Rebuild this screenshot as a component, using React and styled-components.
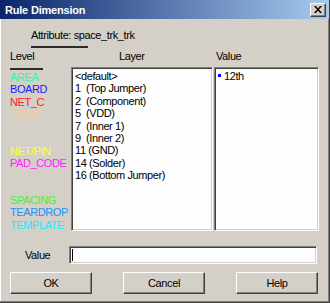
import styled, { createGlobalStyle } from "styled-components";

const GlobalStyle = createGlobalStyle`
  html, body {
    margin: 0;
    padding: 0;
    background: #d4d0c8;
  }
  body {
    font-family: "Liberation Sans", Arial, sans-serif;
    font-size: 11px;
    letter-spacing: -0.4px;
    color: #000;
  }
`;

const Window = styled.div`
  width: 330px;
  height: 303px;
  box-sizing: border-box;
  background: #d4d0c8;
  border-right: 1px solid #404040;
  border-bottom: 1px solid #404040;
  box-shadow: inset -1px -1px 0 #808080, inset 1px 0 0 #ffffff;
  display: flex;
  flex-direction: column;
`;

const TitleBar = styled.div`
  height: 19px;
  flex: none;
  display: flex;
  align-items: center;
  justify-content: space-between;
  padding: 0 3px 0 5px;
  background: linear-gradient(to right, #0a246a, #a6caf0);
  color: #fff;
  font-weight: bold;
  font-size: 11px;
  letter-spacing: -0.2px;
`;

const CloseButton = styled.div`
  width: 16px;
  height: 14px;
  box-sizing: border-box;
  background: #d4d0c8;
  border-top: 1px solid #fff;
  border-left: 1px solid #fff;
  border-right: 1px solid #404040;
  border-bottom: 1px solid #404040;
  box-shadow: inset -1px -1px 0 #808080;
  display: flex;
  align-items: center;
  justify-content: center;
`;

const Body = styled.div`
  flex: 1;
  display: flex;
  flex-direction: column;
  padding: 10px 11px 0 10px;
`;

const AttrTab = styled.div`
  padding-left: 21px;
  display: flex;
  flex-direction: column;
  align-items: flex-start;
  gap: 4px;
  line-height: 13px;
`;

const TabLine = styled.div`
  width: 57px;
  height: 2px;
  background: #2b2b2b;
`;

const Columns = styled.div`
  margin-top: 2px;
  display: grid;
  grid-template-columns: 60px 142px 105px;
  column-gap: 1px;
  grid-template-rows: 17px 164px;
`;

const Header = styled.div`
  line-height: 13px;
  padding-left: ${(p) => p.$indent || 0}px;
`;

const LevelList = styled.div`
  display: flex;
  flex-direction: column;
`;

const LevelRule = styled.div`
  width: 33px;
  height: 2px;
  margin: 1px 0 1px;
  background: #2b2b2b;
`;

const LevelItem = styled.div`
  height: 12.4px;
  line-height: 12.4px;
  color: ${(p) => p.$color};
  white-space: nowrap;
`;

const ListBox = styled.div`
  box-sizing: border-box;
  background: #fdfdfd;
  border-top: 1px solid #808080;
  border-left: 1px solid #808080;
  border-right: 1px solid #fff;
  border-bottom: 1px solid #fff;
  box-shadow: inset 1px 1px 0 #404040, inset -1px -1px 0 #d4d0c8;
  padding: 2px 3px;
  overflow: hidden;
`;

const ListItem = styled.div`
  height: 12.4px;
  line-height: 12.4px;
  white-space: pre;
  display: flex;
  align-items: center;
  gap: 3px;
`;

const Marker = styled.span`
  width: 3px;
  height: 3px;
  background: #0000ff;
  margin-top: -2px;
`;

const ValueRow = styled.div`
  margin-top: 15px;
  display: flex;
  align-items: center;
  padding-left: 15px;
`;

const ValueLabel = styled.div`
  width: 44px;
`;

const Input = styled.div`
  width: 248px;
  height: 18px;
  box-sizing: border-box;
  background: #fdfdfd;
  border-top: 1px solid #808080;
  border-left: 1px solid #808080;
  border-right: 1px solid #fff;
  border-bottom: 1px solid #fff;
  box-shadow: inset 1px 1px 0 #404040, inset -1px -1px 0 #d4d0c8;
  padding: 2px 0 2px 2px;
  display: flex;
`;

const Caret = styled.div`
  width: 1px;
  height: 100%;
  background: #000;
`;

const ButtonRow = styled.div`
  margin-top: 8px;
  display: flex;
  justify-content: space-between;
`;

const Button = styled.div`
  width: 82px;
  height: 22px;
  box-sizing: border-box;
  background: #d4d0c8;
  border-top: 1px solid #fff;
  border-left: 1px solid #fff;
  border-right: 1px solid #404040;
  border-bottom: 1px solid #404040;
  box-shadow: inset -1px -1px 0 #808080;
  display: flex;
  align-items: center;
  justify-content: center;
`;

const levels = [
  { name: "AREA", color: "#40f0a8" },
  { name: "BOARD", color: "#1a1aff" },
  { name: "NET_C", color: "#ff2020" },
  { name: "COMF", color: "#f8c898" },
  { name: "", color: "#000" },
  { name: "", color: "#000" },
  { name: "NET/PIN", color: "#ffff30" },
  { name: "PAD_CODE", color: "#ff20ff" },
  { name: "", color: "#000" },
  { name: "", color: "#000" },
  { name: "SPACING", color: "#40f040" },
  { name: "TEARDROP", color: "#2090ff" },
  { name: "TEMPLATE", color: "#20e8ff" },
];

const layers = [
  "<default>",
  "1  (Top Jumper)",
  "2  (Component)",
  "5  (VDD)",
  "7  (Inner 1)",
  "9  (Inner 2)",
  "11 (GND)",
  "14 (Solder)",
  "16 (Bottom Jumper)",
];

export default function App() {
  return (
    <>
      <GlobalStyle />
      <Window>
        <TitleBar>
          <span>Rule Dimension</span>
          <CloseButton>
            <svg width="8" height="7" viewBox="0 0 8 7">
              <path d="M0 0h2l2 2.5L6 0h2L5 3.5 8 7H6L4 4.5 2 7H0l3-3.5z" fill="#000" />
            </svg>
          </CloseButton>
        </TitleBar>
        <Body>
          <AttrTab>
            <span>Attribute: space_trk_trk</span>
            <TabLine />
          </AttrTab>
          <Columns>
            <Header>Level</Header>
            <Header $indent={48}>Layer</Header>
            <Header $indent={2}>Value</Header>
            <LevelList>
              <LevelRule />
              {levels.map((l, i) => (
                <LevelItem key={i} $color={l.color}>
                  {l.name}
                </LevelItem>
              ))}
            </LevelList>
            <ListBox>
              {layers.map((l) => (
                <ListItem key={l}>{l}</ListItem>
              ))}
            </ListBox>
            <ListBox>
              <ListItem>
                <Marker />
                12th
              </ListItem>
            </ListBox>
          </Columns>
          <ValueRow>
            <ValueLabel>Value</ValueLabel>
            <Input>
              <Caret />
            </Input>
          </ValueRow>
          <ButtonRow>
            <Button>OK</Button>
            <Button>Cancel</Button>
            <Button>Help</Button>
          </ButtonRow>
        </Body>
      </Window>
    </>
  );
}
